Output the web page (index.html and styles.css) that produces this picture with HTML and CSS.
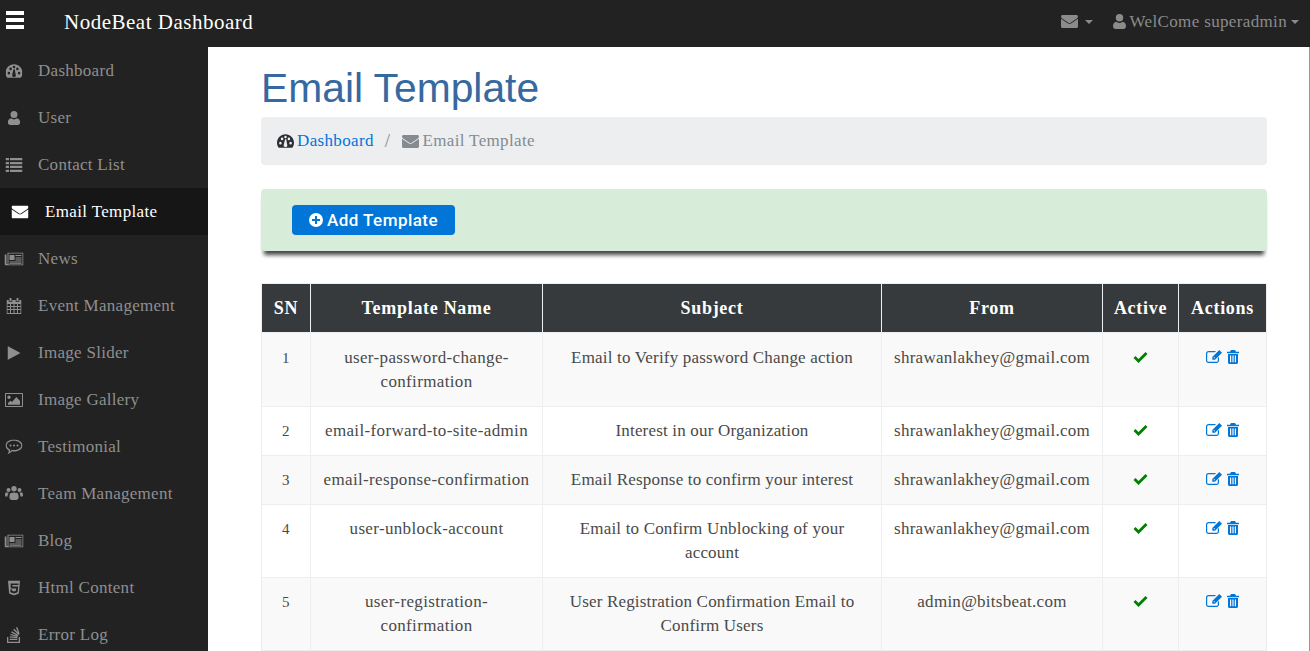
FILE: index.html
```html
<!DOCTYPE html>
<html lang="en">
<head>
  <meta charset="UTF-8">
  <title>Email Template</title>
  <link rel="stylesheet" href="styles.css">
</head>
<body>
  <svg class="sprite" xmlns="http://www.w3.org/2000/svg">
    <symbol id="i-gauge" viewBox="0 0 20 16"><path fill-rule="evenodd" d="M10 0C4.500 0 0 4.400 0 10c0 2.300.8 4.400 2.100 6h15.800C19.200 14.400 20 12.300 20 10 20 4.400 15.500 0 10 0zM4 12a1.500 1.500 0 1 1 0-3 1.500 1.500 0 0 1 0 3zm2-5a1.500 1.500 0 1 1 0-3 1.500 1.500 0 0 1 0 3zm4-2.200a1.500 1.500 0 1 1 0-3 1.500 1.500 0 0 1 0 3zM12.200 13a2.200 2.200 0 1 1-4.300-.7L9.500 6h1.400l1 6zM14 7a1.500 1.500 0 1 1 0-3 1.500 1.500 0 0 1 0 3zm2 5a1.500 1.500 0 1 1 0-3 1.500 1.500 0 0 1 0 3z"/></symbol>
    <symbol id="i-user" viewBox="0 0 14 16"><path d="M7 8a4 4 0 1 0 0-8 4 4 0 0 0 0 8zM3.800 8.300C1.500 8.600 0 10.300 0 13.200 0 15 1.200 16 2.800 16h8.400c1.600 0 2.800-1 2.800-2.800 0-2.900-1.500-4.600-3.800-4.900C9.300 9.200 8.200 9.600 7 9.600s-2.300-.4-3.200-1.300z"/></symbol>
    <symbol id="i-list" viewBox="0 0 17 14"><path d="M0 0h3.500v2.300H0zM4.500 0H17v2.300H4.500zM0 3.900h3.500v2.300H0zM4.500 3.900H17v2.300H4.500zM0 7.800h3.500v2.300H0zM4.500 7.800H17v2.300H4.500zM0 11.700h3.500V14H0zM4.500 11.700H17V14H4.500z"/></symbol>
    <symbol id="i-mail" viewBox="0 0 17 13"><path d="M1.500 0h14C16.300 0 17 .7 17 1.500c0 .8-.5 1.500-1.100 1.900L9.300 8a1.500 1.500 0 0 1-1.600 0L1.100 3.400C.5 3 0 2.300 0 1.500 0 .7.700 0 1.500 0zM0 3.700l7 4.800c.9.600 2.100.6 3 0l7-4.800v7.800c0 .8-.7 1.500-1.500 1.500h-14C.7 13 0 12.300 0 11.500z"/></symbol>
    <symbol id="i-news" viewBox="0 0 19 13"><path fill-rule="evenodd" d="M3 0h16v13H1.500C.7 13 0 12.300 0 11.500V2h2v9.500h1zM4 1v11h14V1zM5 2.500h5v5H5zM11 2.500h6v1h-6zM11 5h6v1h-6zM11 7h6v1h-6zM5 9h12v1H5zM5 10.700h12v.8H5z"/></symbol>
    <symbol id="i-cal" viewBox="0 0 15 16"><path fill-rule="evenodd" d="M3 0h2v3H3zM10 0h2v3h-2zM0 2h2.200v1.700h3.600V2h3.400v1.700h3.600V2H15v14H0zM1 6v2h2.500V6zM4.500 6v2H7V6zM8 6v2h2.500V6zM11.500 6v2H14V6zM1 9v2h2.500V9zM4.500 9v2H7V9zM8 9v2h2.500V9zM11.500 9v2H14V9zM1 12v3h2.500v-3zM4.500 12v3H7v-3zM8 12v3h2.500v-3zM11.500 12v3H14v-3z"/></symbol>
    <symbol id="i-play" viewBox="0 0 13 14"><path d="M0 0l13 7-13 7z"/></symbol>
    <symbol id="i-pic" viewBox="0 0 18 14"><path fill-rule="evenodd" d="M1 0h16c.6 0 1 .4 1 1v12c0 .6-.4 1-1 1H1c-.6 0-1-.4-1-1V1c0-.6.4-1 1-1zm0 1v12h16V1zM4 2.500a1.700 1.700 0 1 1 0 3.400 1.700 1.700 0 0 1 0-3.400zM3 11.800V10l2.500-2.300L7 9l4.300-5L15 8v3.800z"/></symbol>
    <symbol id="i-chat" viewBox="0 0 17 15"><path fill-rule="evenodd" d="M8.500 0C13.200 0 17 2.600 17 6s-3.800 6-8.500 6c-.7 0-1.400-.1-2-.2C5.300 13 3.500 14.400 1.800 15c.9-1.100 1.400-2.300 1.500-4C1.300 9.900 0 8.100 0 6 0 2.600 3.800 0 8.500 0zm0 1.300C4.500 1.300 1.300 3.400 1.300 6c0 1.700 1.300 3.200 3.300 4.100 0 .7-.1 1.400-.3 1.900.8-.5 1.500-1.100 2-1.700.7.100 1.400.2 2.200.2 4 0 7.200-2.100 7.200-4.500S12.500 1.300 8.500 1.300zM5 5a1 1 0 1 1 0 2 1 1 0 0 1 0-2zm3.500 0a1 1 0 1 1 0 2 1 1 0 0 1 0-2zM12 5a1 1 0 1 1 0 2 1 1 0 0 1 0-2z"/></symbol>
    <symbol id="i-team" viewBox="0 0 18 16"><path d="M3.500 2a2 2 0 1 1 0 4 2 2 0 0 1 0-4zM14.500 2a2 2 0 1 1 0 4 2 2 0 0 1 0-4zM9 0a2.700 2.700 0 1 1 0 5.400A2.700 2.700 0 0 1 9 0zM9 6.300c.8.500 1.500.7 2.300.5 1.300 0 2.300 1.300 2.300 4.200 0 1.800-1 3-2.600 3H7c-1.600 0-2.600-1.200-2.600-3 0-2.900 1-4.200 2.300-4.200.8.200 1.500 0 2.300-.5zM1.500 6.200c.8.500 1.600.600 2.300.5-.7.800-1.200 2-1.200 3.800H1C.4 10.500 0 10 0 9c0-1.700.4-2.800 1.500-2.800zM16.500 6.200C17.600 6.200 18 7.300 18 9c0 1-.4 1.500-1 1.500h-1.600c0-1.800-.5-3-1.200-3.800.7.100 1.500 0 2.300-.5z"/></symbol>
    <symbol id="i-html5" viewBox="0 0 12 15"><path fill-rule="evenodd" d="M0 0h12l-1.100 13L6 15l-4.900-2zM2.500 3l.4 5h5.300l-.2 2.300-1.900.6-2-.6-.1-1.300H2.300l.2 2.800L6 12.900l3.600-1.100.6-5.800H4.500l-.2-1.400h6l.2-1.600z"/></symbol>
    <symbol id="i-stack" viewBox="0 0 14 16"><path d="M0 10h1.300v4.700h10.400V10H13v6H0zM2.700 11.700h7.600v1.400H2.700zM2.900 9.300l7.500.7-.1 1.300-7.500-.7zM3.500 6.900l7.300 1.900-.4 1.300-7.300-2zM4.800 4.300l6.600 3.600-.7 1.200L4.100 5.500zM7.200 1.700l5.300 5.300-1 1L6.200 2.700zM10.300 0l2.300 6.500-1.300.5L9 .5z"/></symbol>
    <symbol id="i-plus" viewBox="0 0 14 14"><path fill-rule="evenodd" d="M7 0a7 7 0 1 1 0 14A7 7 0 0 1 7 0zM6 3v3H3v2h3v3h2V8h3V6H8V3z"/></symbol>
    <symbol id="i-check" viewBox="0 0 14 11"><path d="M5 11L0 6l2-2 3 3 7-7 2 2z"/></symbol>
    <symbol id="i-edit" viewBox="0 0 16 14"><path fill-rule="evenodd" d="M2.500 1H10L8.800 2.200H2.500c-.7 0-1.300.6-1.300 1.300v7c0 .7.600 1.300 1.300 1.300h8c.7 0 1.300-.6 1.300-1.300V8l1.200-1.200v3.700c0 1.400-1.100 2.500-2.500 2.500h-8C1.100 13 0 11.900 0 10.500v-7C0 2.100 1.100 1 2.500 1zM13.300 0L16 2.700 9 9.700H6.300V7zM7.500 7.500l1 1 .6-.6-1-1z"/></symbol>
    <symbol id="i-trash" viewBox="0 0 12 14"><path fill-rule="evenodd" d="M4 0h4l1 1.800h3v1.400H0V1.800h3zM1 4h10v8.500c0 .8-.7 1.500-1.500 1.500h-7C1.700 14 1 13.300 1 12.500zm2 1.500v6.800h1.200V5.500zm2.400 0v6.800h1.200V5.500zm2.400 0v6.800H9V5.500z"/></symbol>
  </svg>

  <nav class="topbar">
    <div class="burger"><span></span><span></span><span></span></div>
    <a class="brand">NodeBeat Dashboard</a>
    <div class="top-right">
      <a class="top-link"><svg class="ico ico-top-mail"><use href="#i-mail"/></svg><i class="caret caret-wide"></i></a>
      <a class="top-link"><svg class="ico ico-top-user"><use href="#i-user"/></svg>WelCome superadmin<i class="caret"></i></a>
    </div>
  </nav>

  <div class="wrap">
    <aside class="sidebar">
      <a class="side-item"><svg class="ico s-gauge"><use href="#i-gauge"/></svg>Dashboard</a>
      <a class="side-item"><svg class="ico s-user"><use href="#i-user"/></svg>User</a>
      <a class="side-item"><svg class="ico s-list"><use href="#i-list"/></svg>Contact List</a>
      <a class="side-item active"><svg class="ico s-mail"><use href="#i-mail"/></svg>Email Template</a>
      <a class="side-item"><svg class="ico s-news"><use href="#i-news"/></svg>News</a>
      <a class="side-item"><svg class="ico s-cal"><use href="#i-cal"/></svg>Event Management</a>
      <a class="side-item"><svg class="ico s-play"><use href="#i-play"/></svg>Image Slider</a>
      <a class="side-item"><svg class="ico s-pic"><use href="#i-pic"/></svg>Image Gallery</a>
      <a class="side-item"><svg class="ico s-chat"><use href="#i-chat"/></svg>Testimonial</a>
      <a class="side-item"><svg class="ico s-team"><use href="#i-team"/></svg>Team Management</a>
      <a class="side-item"><svg class="ico s-news"><use href="#i-news"/></svg>Blog</a>
      <a class="side-item"><svg class="ico s-html5"><use href="#i-html5"/></svg>Html Content</a>
      <a class="side-item"><svg class="ico s-stack"><use href="#i-stack"/></svg>Error Log</a>
    </aside>

    <main class="content">
      <h1 class="page-title">Email Template</h1>

      <div class="breadcrumb">
        <svg class="ico bc-gauge"><use href="#i-gauge"/></svg>
        <a class="bc-link">Dashboard</a>
        <span class="bc-sep">/</span>
        <svg class="ico bc-mail"><use href="#i-mail"/></svg>
        <span class="bc-current">Email Template</span>
      </div>

      <div class="toolbar">
        <button class="btn-add"><svg class="ico btn-plus"><use href="#i-plus"/></svg>Add Template</button>
      </div>

      <table class="grid">
        <colgroup>
          <col class="c-sn"><col class="c-name"><col class="c-subject"><col class="c-from"><col class="c-active"><col class="c-actions">
        </colgroup>
        <thead>
          <tr><th>SN</th><th>Template Name</th><th>Subject</th><th>From</th><th>Active</th><th>Actions</th></tr>
        </thead>
        <tbody>
          <tr>
            <td>1</td>
            <td>user-password-change-<br>confirmation</td>
            <td>Email to Verify password Change action</td>
            <td>shrawanlakhey@gmail.com</td>
            <td><svg class="ico tick"><use href="#i-check"/></svg></td>
            <td><svg class="ico edit"><use href="#i-edit"/></svg><svg class="ico trash"><use href="#i-trash"/></svg></td>
          </tr>
          <tr>
            <td>2</td>
            <td>email-forward-to-site-admin</td>
            <td>Interest in our Organization</td>
            <td>shrawanlakhey@gmail.com</td>
            <td><svg class="ico tick"><use href="#i-check"/></svg></td>
            <td><svg class="ico edit"><use href="#i-edit"/></svg><svg class="ico trash"><use href="#i-trash"/></svg></td>
          </tr>
          <tr>
            <td>3</td>
            <td>email-response-confirmation</td>
            <td>Email Response to confirm your interest</td>
            <td>shrawanlakhey@gmail.com</td>
            <td><svg class="ico tick"><use href="#i-check"/></svg></td>
            <td><svg class="ico edit"><use href="#i-edit"/></svg><svg class="ico trash"><use href="#i-trash"/></svg></td>
          </tr>
          <tr>
            <td>4</td>
            <td>user-unblock-account</td>
            <td>Email to Confirm Unblocking of your<br>account</td>
            <td>shrawanlakhey@gmail.com</td>
            <td><svg class="ico tick"><use href="#i-check"/></svg></td>
            <td><svg class="ico edit"><use href="#i-edit"/></svg><svg class="ico trash"><use href="#i-trash"/></svg></td>
          </tr>
          <tr>
            <td>5</td>
            <td>user-registration-<br>confirmation</td>
            <td>User Registration Confirmation Email to<br>Confirm Users</td>
            <td>admin@bitsbeat.com</td>
            <td><svg class="ico tick"><use href="#i-check"/></svg></td>
            <td><svg class="ico edit"><use href="#i-edit"/></svg><svg class="ico trash"><use href="#i-trash"/></svg></td>
          </tr>
        </tbody>
      </table>
    </main>
  </div>
</body>
</html>
```

FILE: styles.css
```css
* {
  box-sizing: border-box;
}
html, body {
  height: 651px;
  overflow: hidden;
}
body {
  margin: 0;
  font-family: "Liberation Serif", serif;
  font-size: 17px;
  letter-spacing: 0.35px;
  line-height: 24px;
  color: #494949;
  background: #fff;
}
.sprite {
  display: none;
}
.ico {
  display: inline-block;
  fill: currentColor;
  flex: none;
}

/* top bar */
.topbar {
  display: flex;
  align-items: center;
  height: 47px;
  background: #222;
}
.burger {
  display: flex;
  flex-direction: column;
  gap: 3px;
  width: 18px;
  margin-left: 6px;
  margin-top: -7px;
}
.burger span {
  height: 4px;
  background: #fff;
}
.brand {
  margin-left: 40px;
  margin-top: -4px;
  font-size: 21px;
  letter-spacing: 0.5px;
  color: #fff;
}
.top-right {
  display: flex;
  align-items: center;
  margin-left: auto;
  margin-right: 11px;
  margin-top: -4px;
  color: #8b8b8b;
}
.top-link {
  display: flex;
  align-items: center;
  margin-left: 20px;
}
.ico-top-mail {
  width: 17px;
  height: 13px;
}
.ico-top-user {
  width: 13px;
  height: 15px;
  margin-right: 4px;
}
.caret {
  width: 0;
  height: 0;
  margin-left: 4px;
  border-top: 4px solid currentColor;
  border-left: 4px solid transparent;
  border-right: 4px solid transparent;
}
.caret-wide {
  margin-left: 7px;
}

/* sidebar */
.wrap {
  display: flex;
  height: 604px;
}
.sidebar {
  flex: none;
  width: 208px;
  background: #222;
  overflow: hidden;
}
.side-item {
  display: flex;
  align-items: center;
  height: 47px;
  padding-left: 38px;
  position: relative;
  letter-spacing: 0.28px;
  color: #8f8f8f;
}
.side-item .ico {
  position: absolute;
  top: 50%;
  transform: translate(-50%, -50%);
  left: 13.5px;
}
.side-item.active {
  padding-left: 45px;
  background: #161616;
  letter-spacing: 0.35px;
  color: #fff;
}
.side-item.active .ico {
  left: 20px;
}
.s-gauge { width: 17px; height: 14px; }
.s-user { width: 13px; height: 14px; }
.s-list { width: 17px; height: 14px; }
.s-mail { width: 17px; height: 13px; }
.s-news { width: 19px; height: 13px; }
.s-cal { width: 15px; height: 16px; }
.s-play { width: 13px; height: 14px; }
.s-pic { width: 18px; height: 14px; }
.s-chat { width: 17px; height: 15px; }
.s-team { width: 18px; height: 16px; }
.s-html5 { width: 12px; height: 15px; }
.s-stack { width: 14px; height: 16px; }

/* content */
.content {
  flex: 1;
  padding: 0 42px 0 53px;
  border-right: 1px solid #999;
  overflow: hidden;
}
.page-title {
  margin: 0;
  padding-top: 19px;
  height: 70px;
  font-family: "Liberation Sans", sans-serif;
  font-size: 40.8px;
  font-weight: 400;
  letter-spacing: 0;
  line-height: 44px;
  color: #35699f;
}
.breadcrumb {
  display: flex;
  align-items: center;
  height: 48px;
  padding: 0 16px;
  background: #eceef0;
  border-radius: 4px;
  color: #848b91;
}
.bc-gauge {
  width: 17px;
  height: 14px;
  margin-right: 3px;
  color: #2b2f33;
}
.bc-link {
  color: #0275d8;
}
.bc-sep {
  margin: 0 12px 0 11px;
  font-size: 19px;
  color: #858c92;
}
.bc-mail {
  width: 17px;
  height: 13px;
  margin-right: 3px;
}
.toolbar {
  display: flex;
  align-items: center;
  height: 62px;
  margin-top: 24px;
  padding-left: 31px;
  background: #d8edd9;
  border-radius: 4px;
  box-shadow: 0 7px 4px -3px #444;
}
.btn-add {
  display: flex;
  align-items: center;
  height: 30px;
  padding: 0 17.5px 0 17px;
  background: #0275d8;
  border: 0;
  border-radius: 4px;
  font-family: Roboto, sans-serif;
  font-size: 17px;
  font-weight: 500;
  letter-spacing: 0.45px;
  color: #fff;
}
.btn-plus {
  width: 14px;
  height: 14px;
  margin-right: 4px;
}

/* table */
.grid {
  width: 1005px;
  margin-top: 32px;
  border-collapse: collapse;
  table-layout: fixed;
  text-align: center;
}
.c-sn { width: 49px; }
.c-name { width: 232px; }
.c-subject { width: 339px; }
.c-from { width: 221px; }
.c-active { width: 76px; }
.c-actions { width: 88px; }
.grid th {
  height: 49px;
  padding: 0 0 1px;
  background: #373a3c;
  border: 1px solid #eceeef;
  font-size: 18px;
  font-weight: 700;
  letter-spacing: 0.7px;
  color: #fff;
}
.grid td {
  height: 49px;
  padding: 12px;
  border: 1px solid #eceeef;
  vertical-align: top;
}
.grid tbody tr:first-child td {
  padding-top: 13px;
}
.grid td:first-child {
  font-size: 15px;
}
.grid td:nth-child(3) {
  letter-spacing: 0.18px;
}
.grid td:nth-child(4) {
  letter-spacing: 0.27px;
}
.grid tbody tr:nth-child(odd) {
  background: #f9f9f9;
}
.tick {
  width: 15px;
  height: 11px;
  color: #008000;
}
.edit {
  width: 16px;
  height: 14px;
  margin-right: 5px;
  vertical-align: -1px;
  color: #0275d8;
}
.trash {
  width: 12px;
  height: 14px;
  vertical-align: -1px;
  color: #0275d8;
}
```
